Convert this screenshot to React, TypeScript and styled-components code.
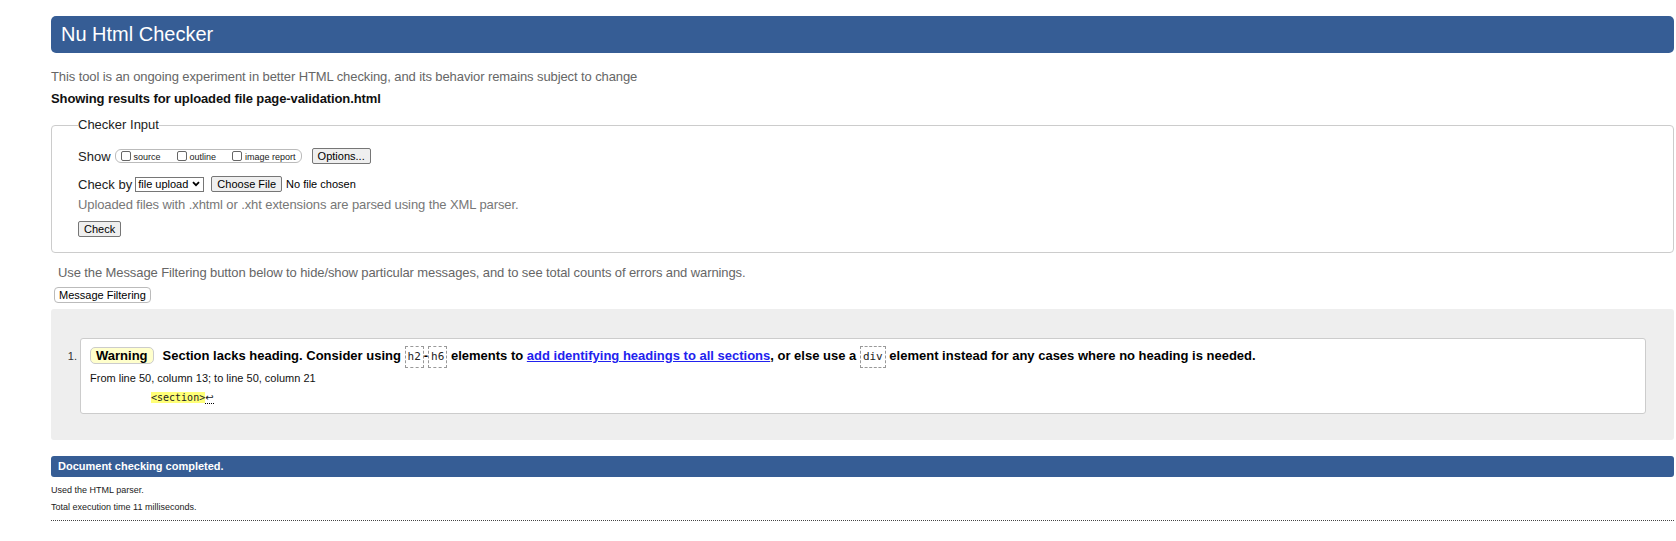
import React from 'react';
import styled, { createGlobalStyle } from 'styled-components';

const GlobalStyle = createGlobalStyle`
  body {
    margin: 0;
    background: #fff;
    color: #000;
    font-family: "Liberation Sans", Arial, sans-serif;
  }
`;

const Page = styled.div`
  padding: 16px 2px 20px 51px;
`;

const Banner = styled.h1`
  margin: 0;
  height: 37px;
  padding: 0 10px;
  background: #365d95;
  border-radius: 5px;
  color: #fff;
  font-size: 20px;
  font-weight: normal;
  line-height: 37px;
`;

const Intro = styled.p`
  margin: 16px 0 0;
  color: #666;
  font-size: 13px;
  line-height: 16px;
  letter-spacing: -0.1px;
`;

const ResultsFor = styled.p`
  margin: 6px 0 0;
  color: #111;
  font-size: 13px;
  font-weight: bold;
  line-height: 16px;
  letter-spacing: -0.1px;
`;

const Fieldset = styled.fieldset`
  margin: 10px 0 0;
  padding: 14px 26px 15px;
  border: 1px solid #ccc;
  border-radius: 4px;
  min-width: 0;
`;

const Legend = styled.legend`
  padding: 0;
  color: #222;
  font-size: 13px;
  line-height: 16px;
`;

const FormRow = styled.div<{ $top?: number }>`
  display: flex;
  align-items: center;
  height: 18px;
  margin-top: ${p => p.$top ?? 0}px;
  font-size: 13px;
  color: #222;
`;

const Options = styled.span`
  display: inline-flex;
  align-items: center;
  height: 12px;
  margin-left: 4px;
  padding: 0 5px;
  border: 1px solid #bbb;
  border-radius: 6px;
`;

const Choice = styled.label`
  display: inline-flex;
  align-items: flex-end;
  margin-right: 16px;
  font-size: 9px;
  line-height: 10px;
  color: #222;

  &:last-child {
    margin-right: 0;
  }
`;

const Box = styled.input`
  appearance: none;
  width: 10px;
  height: 10px;
  margin: 0 3px 1px 0;
  border: 1px solid #666;
  border-radius: 2px;
  background: #fff;
`;

const PlainButton = styled.button<{ $ml?: number }>`
  height: 16px;
  margin-left: ${p => p.$ml ?? 0}px;
  padding: 0 5px;
  background: #efefef;
  border: 1px solid #767676;
  border-radius: 2px;
  color: #000;
  font-family: "Liberation Sans", Arial, sans-serif;
  font-size: 11px;
  line-height: 14px;
`;

const FakeSelect = styled.span`
  display: inline-flex;
  align-items: center;
  gap: 4px;
  height: 13px;
  margin-left: 3px;
  padding: 0 3px 0 2px;
  border: 1px solid #767676;
  font-size: 11px;
  color: #000;
`;

const FileName = styled.span`
  margin-left: 4px;
  font-size: 11px;
  color: #000;
`;

const Hint = styled.p`
  margin: 4px 0 0;
  color: #777;
  font-size: 13px;
  line-height: 16px;
  letter-spacing: -0.1px;
`;

const CheckRow = styled.div`
  margin-top: 6px;
`;

const FilterNote = styled.p`
  margin: 12px 0 0 7px;
  color: #666;
  font-size: 13px;
  line-height: 16px;
  letter-spacing: -0.1px;
`;

const FilterButton = styled.button`
  height: 16px;
  margin: 6px 0 0 3px;
  padding: 0 4px;
  background: #fff;
  border: 1px solid #bbb;
  border-radius: 4px;
  color: #000;
  font-family: "Liberation Sans", Arial, sans-serif;
  font-size: 11px;
  line-height: 14px;
`;

const Results = styled.ol`
  margin: 6px 0 0;
  padding: 29px 28px 26px 29px;
  background: #eee;
  border-radius: 3px;
`;

const Message = styled.li`
  padding: 7px 9px 9px;
  background: #fff;
  border: 1px solid #ccc;
  border-radius: 3px;
  font-size: 13px;

  &::marker {
    font-size: 11px;
    color: #333;
  }
`;

const MessageLine = styled.p`
  margin: 0;
  font-weight: bold;
  line-height: 16px;
`;

const Badge = styled.strong`
  display: inline-block;
  margin-right: 9px;
  padding: 0 5px;
  background: #ffc;
  border: 1px solid #ccc;
  border-radius: 5px;
  line-height: 15px;
`;

const Code = styled.code`
  display: inline-block;
  padding: 2px 2px;
  border: 1px dashed #999;
  font-family: "DejaVu Sans Mono", "Liberation Mono", monospace;
  font-size: 11px;
  font-weight: normal;
  line-height: 16px;
  color: #222;
  vertical-align: middle;
`;

const Link = styled.a`
  color: #22e;
  text-decoration: underline;
`;

const Location = styled.p`
  margin: 4px 0 0;
  font-size: 11px;
  line-height: 13px;
  color: #111;
`;

const Extract = styled.p`
  margin: 6px 0 0 61px;
  font-family: "DejaVu Sans Mono", "Liberation Mono", monospace;
  font-size: 10px;
  line-height: 13px;
  color: #222;
`;

const Mark = styled.mark`
  background: #ff7;
  color: #222;
`;

const LineBreak = styled.span`
  font-family: "DejaVu Sans", sans-serif;
  font-size: 10px;
  border-bottom: 1px dotted #000;
`;

const StatusBar = styled.h2`
  margin: 16px 0 0;
  height: 21px;
  padding: 0 7px;
  background: #365d95;
  border-radius: 3px;
  color: #fff;
  font-size: 11px;
  line-height: 21px;
`;

const Detail = styled.p`
  margin: 0;
  font-size: 9px;
  line-height: 17px;
  color: #222;

  &:first-of-type {
    margin-top: 5px;
  }
`;

const Details = styled.div`
  padding-bottom: 4px;
  border-bottom: 1px dotted #444;
`;

const Chevron = () => (
  <svg width="8" height="6" viewBox="0 0 8 6" aria-hidden>
    <path d="M1 1.2 L4 4.2 L7 1.2" fill="none" stroke="#000" strokeWidth="1.8" />
  </svg>
);

const App: React.FC = () => {
  return (
    <Page>
      <GlobalStyle />
      <Banner>Nu Html Checker</Banner>
      <Intro>This tool is an ongoing experiment in better HTML checking, and its behavior remains subject to change</Intro>
      <ResultsFor>Showing results for uploaded file page-validation.html</ResultsFor>

      <Fieldset>
        <Legend>Checker Input</Legend>
        <FormRow>
          Show
          <Options>
            <Choice><Box type="checkbox" />source</Choice>
            <Choice><Box type="checkbox" />outline</Choice>
            <Choice><Box type="checkbox" />image report</Choice>
          </Options>
          <PlainButton $ml={10}>Options...</PlainButton>
        </FormRow>
        <FormRow $top={10}>
          Check by
          <FakeSelect>file upload <Chevron /></FakeSelect>
          <PlainButton $ml={7}>Choose File</PlainButton>
          <FileName>No file chosen</FileName>
        </FormRow>
        <Hint>Uploaded files with .xhtml or .xht extensions are parsed using the XML parser.</Hint>
        <CheckRow>
          <PlainButton>Check</PlainButton>
        </CheckRow>
      </Fieldset>

      <FilterNote>
        Use the Message Filtering button below to hide/show particular messages, and to see total counts of errors and warnings.
      </FilterNote>
      <FilterButton>Message Filtering</FilterButton>

      <Results>
        <Message>
          <MessageLine>
            <Badge>Warning</Badge>
            Section lacks heading. Consider using <Code>h2</Code>-<Code>h6</Code> elements to{' '}
            <Link href="#">add identifying headings to all sections</Link>, or else use a <Code>div</Code> element
            instead for any cases where no heading is needed.
          </MessageLine>
          <Location>From line 50, column 13; to line 50, column 21</Location>
          <Extract>
            <Mark>&lt;section&gt;</Mark>
            <LineBreak>↩</LineBreak>
          </Extract>
        </Message>
      </Results>

      <StatusBar>Document checking completed.</StatusBar>
      <Details>
        <Detail>Used the HTML parser.</Detail>
        <Detail>Total execution time 11 milliseconds.</Detail>
      </Details>
    </Page>
  );
};

export default App;
